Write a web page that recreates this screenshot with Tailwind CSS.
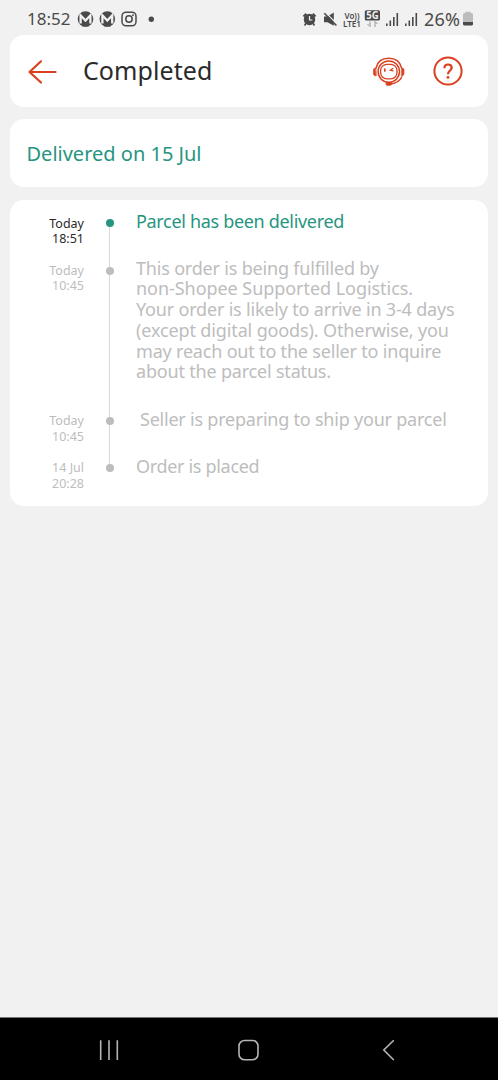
<!DOCTYPE html>
<html lang="en">
<head>
<meta charset="utf-8">
<meta name="viewport" content="width=device-width, initial-scale=1">
<title>Completed</title>
<script src="https://cdn.jsdelivr.net/npm/@tailwindcss/browser@4"></script>
</head>
<body class="flex h-[1080px] w-[498px] flex-col overflow-hidden bg-[#f1f1f1] font-['Noto_Sans',sans-serif] text-[#2b2b2b]">
  <!-- Status bar -->
  <div class="flex h-[35px] shrink-0 items-center pt-[2px] pl-[27px] text-[17px] leading-none text-[#4a4a4a]">
    <span class="w-[50px] whitespace-nowrap">18:52</span>
    <svg class="h-[18px] w-[82px]" viewBox="77 10 82 18" fill="none">
      <g id="m"><circle cx="85.5" cy="19" r="7.8" fill="#4a4a4a"/><path d="M80.6 23.5V15.3L85.5 20.5L90.4 15.3V23.5" stroke="#f1f1f1" stroke-width="2.3"/><path d="M82.3 26.6V20.8L85.5 23.8L88.7 20.8V26.6Z" fill="#4a4a4a"/></g>
      <use href="#m" x="21.8"/>
      <rect x="122" y="12.2" width="14" height="13.6" rx="4" stroke="#4a4a4a" stroke-width="1.5"/><circle cx="129" cy="19" r="3.2" stroke="#4a4a4a" stroke-width="1.5"/><circle cx="133" cy="15.2" r=".9" fill="#4a4a4a"/>
      <circle cx="151.3" cy="19.2" r="2.7" fill="#4a4a4a"/>
    </svg>
    <svg class="ml-[143px] h-[20px] w-[118px]" viewBox="302 9 118 20" fill="none" stroke="#4a4a4a">
      <circle cx="309.5" cy="19.5" r="5.7" fill="#4a4a4a" stroke="none"/><path d="M303.5 16.5L306.3 13.7M315.5 16.5L312.7 13.7" stroke-width="2"/><path d="M305.8 23.5L304.6 25.5M313.2 23.5L314.4 25.5" stroke-width="1.6"/><path d="M309.5 16V20H312.3" stroke="#f1f1f1" stroke-width="1.2"/>
      <path d="M324 16.5H327.5L333.8 12.5V25.8L327.5 22.3H324Z" fill="#4a4a4a" stroke="none"/><path d="M325.5 12.4L337.3 24.5" stroke="#f1f1f1" stroke-width="1.2"/><path d="M324.3 13.2L336.4 25.5" stroke-width="1.6"/>
      <g fill="#4a4a4a" stroke="none" font-family="Noto Sans" font-weight="600"><text x="344.5" y="18.8" font-size="8" textLength="15">Vo))</text><text x="343" y="27" font-size="9" textLength="18" lengthAdjust="spacingAndGlyphs">LTE1</text></g>
      <rect x="364.8" y="10.2" width="15.2" height="10.4" rx="1.5" fill="#4a4a4a" stroke="none"/><text x="366.2" y="19" font-family="Noto Sans" font-weight="700" font-size="10" textLength="12.4" lengthAdjust="spacingAndGlyphs" fill="#f1f1f1" stroke="none">5G</text>
      <path d="M370 21.5V26.5L367.5 24M375 27V21.5L377.5 24" stroke="#999" stroke-width="1"/>
      <path id="sig" d="M386.8 26V23.5M390.3 26V20.5M393.8 26V17M397.3 26V13" stroke-width="1.6"/><use href="#sig" x="19"/>
    </svg>
    <span class="ml-[4px] w-[38px] whitespace-nowrap text-[18px] tracking-[.2px]">26%</span>
    <svg class="h-[16px] w-[12px]" viewBox="0 0 12 16"><path d="M3.5 2V.8H8.5V2H9.5Q11 2 11 3.5V11H1V3.5Q1 2 2.5 2Z" fill="#bcbcbc"/><path d="M1 11H11V13Q11 14.5 9.5 14.5H2.5Q1 14.5 1 13Z" fill="#4a4a4a"/></svg>
  </div>

  <!-- Header -->
  <header class="mx-[10px] flex h-[72px] shrink-0 items-center rounded-[14px] bg-white pl-[17px]">
    <svg class="mt-[2px] h-[26px] w-[30px]" viewBox="27 59 30 26" fill="none" stroke="#d8401f" stroke-width="2.2" stroke-linecap="round" stroke-linejoin="round"><path d="M55.5 72H29.5M41 61.3L29.5 72L41 82.5"/></svg>
    <h1 class="ml-[26px] w-[289px] text-[25px] tracking-[.07px] whitespace-nowrap">Completed</h1>
    <svg class="mt-[2px] h-[32px] w-[34px]" viewBox="372 56 34 32" fill="none" stroke="#d8401f" stroke-width="1.5" stroke-linecap="round">
      <path d="M376 68C377.5 61.5 382.5 58.3 388.8 58.3S400 61.5 401.6 68"/><path d="M401.8 77C399.5 81.7 396 83.5 390 84"/>
      <circle cx="388.8" cy="71.6" r="10.7"/><rect x="380.6" y="64.3" width="16.4" height="14.6" rx="6.3" stroke-width="1.3"/>
      <path d="M375.5 68.2C372.6 68.2 373.5 70 373.5 72S373 75.8 376 75.8ZM402 68.2C404.8 68.2 403.9 70 403.9 72S404.4 75.8 401.6 75.8Z" fill="#d8401f" stroke-width=".7"/>
      <path d="M384.8 69.2V71" stroke-width="1.7"/><path d="M392.8 68.5L390.3 70.3L393 70.9" stroke-width="1.2"/><rect x="386" y="82.8" width="5.5" height="2.5" rx="1" fill="#d8401f" stroke-width=".7"/>
    </svg>
    <svg class="ml-[26px] h-[32px] w-[32px]" viewBox="0 0 32 32" fill="none" stroke="#d8401f" stroke-width="2"><circle cx="16" cy="16" r="13.6"/><path d="M12.4 13.2C12.4 10.8 13.8 9.5 16 9.5S19.7 10.8 19.7 12.8C19.7 15.5 16 15.6 16 19.2" stroke-width="2.2"/><circle cx="16" cy="22.4" r="1.4" fill="#d8401f" stroke="none"/></svg>
  </header>

  <section class="mx-[10px] mt-[12px] flex h-[68px] shrink-0 items-center rounded-[14px] bg-white pt-[2px] pl-[16.5px] text-[20px] text-[#26957f]"><p>Delivered on 15 Jul</p></section>

  <!-- Tracking timeline -->
  <main class="mx-[10px] mt-[13px] h-[306px] shrink-0 rounded-[14px] bg-white pt-[11px] text-[18px] leading-[20.8px] text-[#bdbdbd]">
    <div class="flex h-[47px]">
      <p class="w-[74px] pt-[4.5px] text-right text-[12.5px] leading-[15.6px] text-[#2b2b2b]">Today<br>18:51</p>
      <div class="ml-[21px] flex w-[9px] flex-col items-center pt-[8px]"><i class="size-[8px] shrink-0 rounded-full bg-[#26957f]"></i><i class="w-px grow bg-[#d8d8d8]"></i></div>
      <p class="ml-[22px] -mt-[.5px] tracking-[-.32px] whitespace-nowrap text-[#26957f]">Parcel has been delivered</p>
    </div>
    <div class="flex h-[150.5px]">
      <p class="w-[74px] pt-[4.5px] text-right text-[12.5px] leading-[15.6px]">Today<br>10:45</p>
      <div class="ml-[21px] flex w-[9px] flex-col items-center"><i class="h-[8.5px] w-px bg-[#d8d8d8]"></i><i class="size-[8px] shrink-0 rounded-full bg-[#bdbdbd]"></i><i class="w-px grow bg-[#d8d8d8]"></i></div>
      <p class="ml-[22px] -mt-[.5px] tracking-[-.19px] whitespace-nowrap">This order is being fulfilled by<br><span class="tracking-[-.05px]">non-Shopee Supported Logistics.</span><br>Your order is likely to arrive in 3-4 days<br><span class="tracking-[-.13px]">(except digital goods). Otherwise, you</span><br>may reach out to the seller to inquire<br>about the parcel status.</p>
    </div>
    <div class="flex h-[47px]">
      <p class="w-[74px] pt-[4.5px] text-right text-[12.5px] leading-[15.6px]">Today<br>10:45</p>
      <div class="ml-[21px] flex w-[9px] flex-col items-center"><i class="h-[8.5px] w-px bg-[#d8d8d8]"></i><i class="size-[8px] shrink-0 rounded-full bg-[#bdbdbd]"></i><i class="w-px grow bg-[#d8d8d8]"></i></div>
      <p class="ml-[26px] tracking-[-.22px] whitespace-nowrap">Seller is preparing to ship your parcel</p>
    </div>
    <div class="flex h-[47px]">
      <p class="w-[74px] pt-[4.5px] text-right text-[12.5px] leading-[15.6px]">14 Jul<br>20:28</p>
      <div class="ml-[21px] flex w-[9px] flex-col items-center"><i class="h-[8.5px] w-px bg-[#d8d8d8]"></i><i class="size-[8px] shrink-0 rounded-full bg-[#bdbdbd]"></i></div>
      <p class="ml-[22px] tracking-[-.32px] whitespace-nowrap">Order is placed</p>
    </div>
  </main>

  <!-- System navigation -->
  <nav class="mt-auto h-[63px] shrink-0 border-t border-[#777] bg-black">
    <svg class="h-[62px] w-[498px]" viewBox="0 1018 498 62" fill="none" stroke="#b5b5b5" stroke-width="1.6"><path d="M100.7 1040.3V1060M109 1040.3V1060M117.3 1040.3V1060"/><rect x="239" y="1040.5" width="19" height="19.2" rx="5.5"/><path d="M393.8 1040.3L383.8 1050L393.8 1060"/></svg>
  </nav>
</body>
</html>
